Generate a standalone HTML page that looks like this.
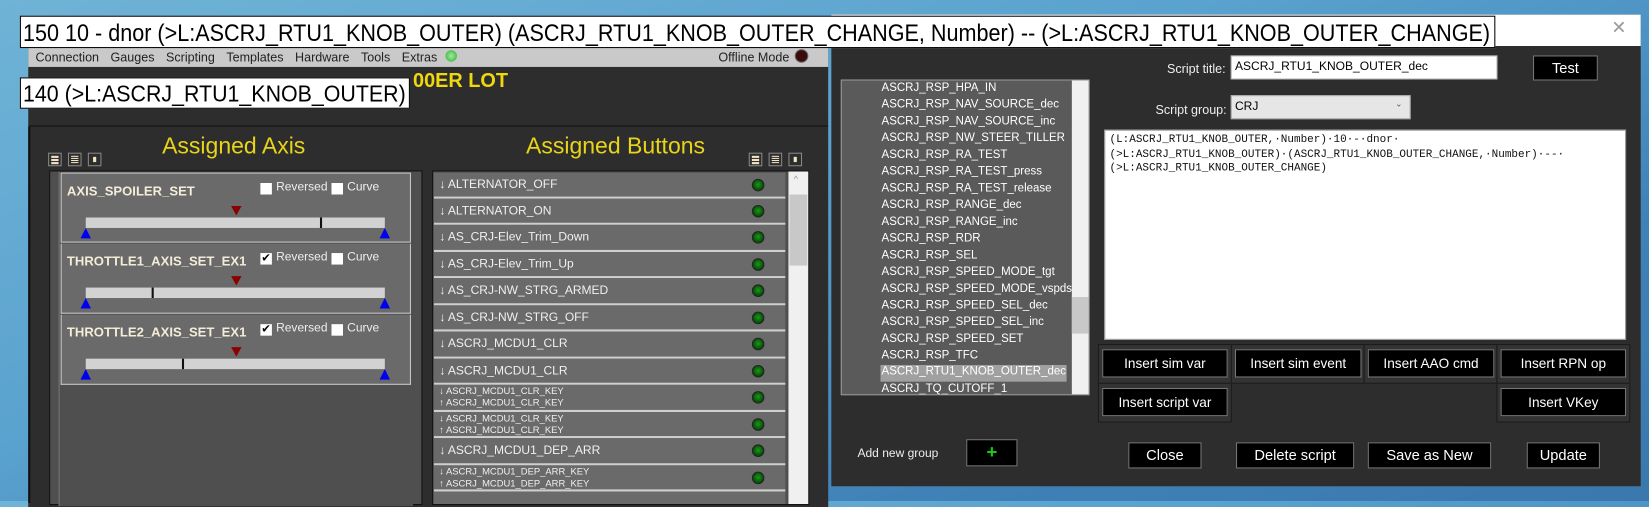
<!DOCTYPE html>
<html><head><meta charset="utf-8"><style>
*{margin:0;padding:0;box-sizing:border-box}
body{width:1649px;height:501px;overflow:hidden;background:linear-gradient(160deg,#6fb3d6 0%,#5aa2cf 40%,#3f82b8 75%,#3a78ad 100%);font-family:"Liberation Sans",sans-serif;position:relative}
#w{position:absolute;left:0;top:0;width:1577px;height:479px;transform:scale(1.0457);transform-origin:0 0}
.a{position:absolute}
.t{position:absolute;white-space:nowrap}
.menu span{margin-right:11px}
.item{position:absolute;left:10px;width:335px;height:67px;background:#6a6a6a;border:1px solid #c8c8c8;border-top:none}
.item .n{position:absolute;left:5px;top:10px;font-weight:bold;font-size:12.5px;color:#f3ecd8}
.cb{position:absolute;top:9px;width:11px;height:11px;background:#fff}
.lbl{position:absolute;top:7px;font-size:11.5px;color:#eee}
.bar{position:absolute;left:23px;top:42px;width:286px;height:10px;background:#d2d2d2}
.red{position:absolute;left:162px;top:31px;width:0;height:0;border-left:5px solid transparent;border-right:5px solid transparent;border-top:9px solid #8b0000}
.blu{position:absolute;top:52px;width:0;height:0;border-left:5px solid transparent;border-right:5px solid transparent;border-bottom:10px solid #0000f0}
.bi{position:absolute;left:1px;width:336px;background:#6a6a6a;border-bottom:2px solid #cfcfcf;color:#f0f0f0;font-size:11.5px}
.bi .l{position:absolute;left:5px;top:6px}
.bi .s{position:absolute;left:5px;font-size:9px}
.led{position:absolute;left:304px;width:12px;height:12px;border-radius:50%;background:radial-gradient(circle at 50% 45%,#1a9a1a,#064a06 70%);border:1px solid #222}
.ico{position:absolute;top:146px;width:13px;height:13px;border:1px solid #888;background:#2d2d2d}
.ico i{position:absolute;left:2px;right:2px;height:2px;background:#f4e4c4}
.li{position:absolute;left:38px;font-size:11px;color:#fff}
.btn{position:absolute;background:#000;border:1px solid #777;color:#fff;font-size:13px;text-align:center}
.cell{position:absolute;background:#333;border:1px solid #1c1c1c}
</style></head><body><div id="w">

<!-- left app -->
<div class="a" style="left:27px;top:45px;width:765px;height:440px;background:#2d2d2d"></div>
<div class="a menu" style="left:27px;top:45px;width:765px;height:19px;background:#c9c9c9;font-size:12px;color:#222;padding:3px 0 0 7px;white-space:nowrap"><span>Connection</span><span>Gauges</span><span>Scripting</span><span>Templates</span><span>Hardware</span><span>Tools</span><span>Extras</span></div>
<div class="a" style="left:426px;top:48px;width:11px;height:11px;border-radius:50%;background:radial-gradient(#9e9,#3a3)"></div>
<div class="t" style="left:687px;top:48px;font-size:12px;color:#222">Offline Mode</div>
<div class="a" style="left:760px;top:47px;width:13px;height:13px;border-radius:50%;background:#3a0c0c;border:1px solid #666"></div>
<div class="t" style="left:395px;top:67px;font-size:19px;font-weight:bold;color:#f0d810">00ER LOT</div>
<div class="a" style="left:28px;top:120px;width:764px;height:1px;background:#111"></div>
<div class="a" style="left:27px;top:121px;width:2px;height:360px;background:#111"></div>
<div class="t" style="left:155px;top:127px;font-size:22px;color:#e8d418">Assigned Axis</div>
<div class="t" style="left:503px;top:127px;font-size:22px;color:#e8d418">Assigned Buttons</div>
<div class="ico" style="left:46px"><i style="top:2px"></i><i style="top:5px"></i><i style="top:8px"></i></div>
<div class="ico" style="left:65px"><i style="top:2px;height:1px"></i><i style="top:4px;height:1px"></i><i style="top:6px;height:1px"></i><i style="top:8px;height:1px"></i></div>
<div class="ico" style="left:84px"><i style="left:4px;right:4px;top:3px;height:5px"></i></div>
<div class="ico" style="left:716px"><i style="top:2px"></i><i style="top:5px"></i><i style="top:8px"></i></div>
<div class="ico" style="left:735px"><i style="top:2px;height:1px"></i><i style="top:4px;height:1px"></i><i style="top:6px;height:1px"></i><i style="top:8px;height:1px"></i></div>
<div class="ico" style="left:754px"><i style="left:4px;right:4px;top:3px;height:5px"></i></div>

<!-- axis box -->
<div class="a" style="left:47px;top:163px;width:357px;height:320px;background:#4f4f4f;border:1px solid #111">
 <div class="a" style="left:8px;top:0;width:339px;height:320px;background:#4f4f4f;border-left:1px solid #777"></div>
 <div class="item" style="top:1px;border-top:1px solid #c8c8c8"><div class="n">AXIS_SPOILER_SET</div><div class="cb" style="left:190px"></div><div class="lbl" style="left:205px">Reversed</div><div class="cb" style="left:258px"></div><div class="lbl" style="left:273px">Curve</div><div class="bar"><div class="a" style="left:224px;top:0;width:2px;height:10px;background:#111"></div></div><div class="red"></div><div class="blu" style="left:18px"></div><div class="blu" style="left:304px"></div></div>
 <div class="item" style="top:69px"><div class="n">THROTTLE1_AXIS_SET_EX1</div><div class="cb" style="left:190px;color:#000;font-size:11px;line-height:11px;text-align:center">✔</div><div class="lbl" style="left:205px">Reversed</div><div class="cb" style="left:258px"></div><div class="lbl" style="left:273px">Curve</div><div class="bar"><div class="a" style="left:63px;top:0;width:2px;height:10px;background:#111"></div></div><div class="red"></div><div class="blu" style="left:18px"></div><div class="blu" style="left:304px"></div></div>
 <div class="item" style="top:137px"><div class="n">THROTTLE2_AXIS_SET_EX1</div><div class="cb" style="left:190px;color:#000;font-size:11px;line-height:11px;text-align:center">✔</div><div class="lbl" style="left:205px">Reversed</div><div class="cb" style="left:258px"></div><div class="lbl" style="left:273px">Curve</div><div class="bar"><div class="a" style="left:92px;top:0;width:2px;height:10px;background:#111"></div></div><div class="red"></div><div class="blu" style="left:18px"></div><div class="blu" style="left:304px"></div></div>
</div>

<!-- buttons list -->
<div class="a" style="left:413px;top:163px;width:361px;height:320px;background:#4f4f4f;border:1px solid #111;overflow:hidden">
 <div class="bi" style="top:1px;height:25px"><div class="l">↓ ALTERNATOR_OFF</div><div class="led" style="top:6px"></div></div>
 <div class="bi" style="top:26px;height:25px"><div class="l">↓ ALTERNATOR_ON</div><div class="led" style="top:6px"></div></div>
 <div class="bi" style="top:51px;height:26px"><div class="l">↓ AS_CRJ-Elev_Trim_Down</div><div class="led" style="top:6px"></div></div>
 <div class="bi" style="top:77px;height:25px"><div class="l">↓ AS_CRJ-Elev_Trim_Up</div><div class="led" style="top:6px"></div></div>
 <div class="bi" style="top:102px;height:26px"><div class="l">↓ AS_CRJ-NW_STRG_ARMED</div><div class="led" style="top:6px"></div></div>
 <div class="bi" style="top:128px;height:25px"><div class="l">↓ AS_CRJ-NW_STRG_OFF</div><div class="led" style="top:6px"></div></div>
 <div class="bi" style="top:153px;height:26px"><div class="l">↓ ASCRJ_MCDU1_CLR</div><div class="led" style="top:6px"></div></div>
 <div class="bi" style="top:179px;height:25px"><div class="l">↓ ASCRJ_MCDU1_CLR</div><div class="led" style="top:6px"></div></div>
 <div class="bi" style="top:204px;height:26px"><div class="s" style="top:1px">↓ ASCRJ_MCDU1_CLR_KEY</div><div class="s" style="top:12px">↑ ASCRJ_MCDU1_CLR_KEY</div><div class="led" style="top:6px"></div></div>
 <div class="bi" style="top:230px;height:25px"><div class="s" style="top:1px">↓ ASCRJ_MCDU1_CLR_KEY</div><div class="s" style="top:12px">↑ ASCRJ_MCDU1_CLR_KEY</div><div class="led" style="top:6px"></div></div>
 <div class="bi" style="top:255px;height:26px"><div class="l">↓ ASCRJ_MCDU1_DEP_ARR</div><div class="led" style="top:6px"></div></div>
 <div class="bi" style="top:281px;height:25px"><div class="s" style="top:1px">↓ ASCRJ_MCDU1_DEP_ARR_KEY</div><div class="s" style="top:12px">↑ ASCRJ_MCDU1_DEP_ARR_KEY</div><div class="led" style="top:6px"></div></div>
 <div class="bi" style="top:306px;height:25px"></div>
 <div class="a" style="left:340px;top:0;width:19px;height:320px;background:#f0f0f0"><div class="t" style="left:5px;top:2px;font-size:9px;color:#999">^</div><div class="a" style="left:1px;top:22px;width:17px;height:68px;background:#c8c8c8"></div></div>
</div>

<!-- dialog -->
<div class="a" style="left:795px;top:14px;width:774px;height:451px;background:#2d2d2d"></div>
<div class="a" style="left:795px;top:14px;width:774px;height:30px;background:#fff"></div>
<div class="t" style="left:1541px;top:17px;font-size:17px;color:#999">✕</div>
<div class="t" style="left:1116px;top:59px;font-size:12px;color:#eee">Script title:</div>
<div class="a" style="left:1177px;top:53px;width:255px;height:23px;background:#fff;border:1px solid #bbb;font-size:11.5px;padding:4px 3px;white-space:nowrap">ASCRJ_RTU1_KNOB_OUTER_dec</div>
<div class="btn" style="left:1466px;top:53px;width:62px;height:24px;font-size:14px;line-height:22px">Test</div>
<div class="t" style="left:1105px;top:98px;font-size:12px;color:#eee">Script group:</div>
<div class="a" style="left:1177px;top:91px;width:172px;height:23px;background:#e6e6e6;border:1px solid #aaa;font-size:11.5px;padding:4px 3px">CRJ<span style="position:absolute;right:7px;top:3px;font-size:8px;color:#555">⌄</span></div>

<div class="a" style="left:804px;top:76px;width:238px;height:302px;background:#5a5a5a;border:1px solid #999;overflow:hidden">
 <div class="li" style="top:1px">ASCRJ_RSP_HPA_IN</div>
 <div class="li" style="top:17px">ASCRJ_RSP_NAV_SOURCE_dec</div>
 <div class="li" style="top:33px">ASCRJ_RSP_NAV_SOURCE_inc</div>
 <div class="li" style="top:49px">ASCRJ_RSP_NW_STEER_TILLER</div>
 <div class="li" style="top:65px">ASCRJ_RSP_RA_TEST</div>
 <div class="li" style="top:81px">ASCRJ_RSP_RA_TEST_press</div>
 <div class="li" style="top:97px">ASCRJ_RSP_RA_TEST_release</div>
 <div class="li" style="top:113px">ASCRJ_RSP_RANGE_dec</div>
 <div class="li" style="top:129px">ASCRJ_RSP_RANGE_inc</div>
 <div class="li" style="top:145px">ASCRJ_RSP_RDR</div>
 <div class="li" style="top:161px">ASCRJ_RSP_SEL</div>
 <div class="li" style="top:177px">ASCRJ_RSP_SPEED_MODE_tgt</div>
 <div class="li" style="top:193px">ASCRJ_RSP_SPEED_MODE_vspds</div>
 <div class="li" style="top:209px">ASCRJ_RSP_SPEED_SEL_dec</div>
 <div class="li" style="top:225px">ASCRJ_RSP_SPEED_SEL_inc</div>
 <div class="li" style="top:241px">ASCRJ_RSP_SPEED_SET</div>
 <div class="li" style="top:257px">ASCRJ_RSP_TFC</div>
 <div class="li" style="top:272px;left:37px;background:#a0a0a0;padding:0 1px;height:16px">ASCRJ_RTU1_KNOB_OUTER_dec</div>
 <div class="li" style="top:289px">ASCRJ_TQ_CUTOFF_1</div>
 <div class="li" style="top:305px">ASCRJ_TQ_CUTOFF_2</div>
 <div class="a" style="left:220px;top:0;width:17px;height:302px;background:#f0f0f0"><div class="a" style="left:0;top:207px;width:17px;height:35px;background:#c8c8c8"></div></div>
</div>

<div class="a" style="left:1056px;top:124px;width:499px;height:201px;background:#fff;border:1px solid #999;font-family:'Liberation Mono',monospace;font-size:10.5px;line-height:13.5px;padding:3px 4px;color:#111;white-space:pre">(L:ASCRJ_RTU1_KNOB_OUTER,·Number)·10·-·dnor·
(>L:ASCRJ_RTU1_KNOB_OUTER)·(ASCRJ_RTU1_KNOB_OUTER_CHANGE,·Number)·--·
(>L:ASCRJ_RTU1_KNOB_OUTER_CHANGE)</div>

<div class="cell" style="left:1050px;top:329px;width:128px;height:38px"></div>
<div class="cell" style="left:1177px;top:329px;width:128px;height:38px"></div>
<div class="cell" style="left:1304px;top:329px;width:128px;height:38px"></div>
<div class="cell" style="left:1431px;top:329px;width:128px;height:38px"></div>
<div class="cell" style="left:1050px;top:366px;width:128px;height:38px"></div>
<div class="cell" style="left:1431px;top:366px;width:128px;height:38px"></div>
<div class="btn" style="left:1054px;top:334px;width:120px;height:27px;line-height:25px">Insert sim var</div>
<div class="btn" style="left:1181px;top:334px;width:121px;height:27px;line-height:25px">Insert sim event</div>
<div class="btn" style="left:1308px;top:334px;width:121px;height:27px;line-height:25px">Insert AAO cmd</div>
<div class="btn" style="left:1435px;top:334px;width:120px;height:27px;line-height:25px">Insert RPN op</div>
<div class="btn" style="left:1054px;top:371px;width:120px;height:27px;line-height:25px">Insert script var</div>
<div class="btn" style="left:1435px;top:371px;width:120px;height:27px;line-height:25px">Insert VKey</div>

<div class="t" style="left:820px;top:428px;font-size:11.5px;color:#eee">Add new group</div>
<div class="btn" style="left:924px;top:420px;width:49px;height:26px;color:#1c1;font-size:18px;line-height:22px;font-weight:bold">+</div>
<div class="btn" style="left:1079px;top:423px;width:70px;height:25px;font-size:14px;line-height:23px">Close</div>
<div class="btn" style="left:1182px;top:423px;width:113px;height:25px;font-size:14px;line-height:23px">Delete script</div>
<div class="btn" style="left:1308px;top:423px;width:118px;height:25px;font-size:14px;line-height:23px">Save as New</div>
<div class="btn" style="left:1460px;top:423px;width:70px;height:25px;font-size:14px;line-height:23px">Update</div>

<!-- tooltips -->
<div class="a" style="left:19px;top:15px;width:1411px;height:31px;background:#fff;border:1px solid #000">
<svg width="1409" height="29" style="position:absolute;left:0;top:0"><text x="2" y="23" font-family="Liberation Sans, sans-serif" font-size="23" textLength="1403" lengthAdjust="spacingAndGlyphs" fill="#000">150 10 - dnor (&gt;L:ASCRJ_RTU1_KNOB_OUTER) (ASCRJ_RTU1_KNOB_OUTER_CHANGE, Number) -- (&gt;L:ASCRJ_RTU1_KNOB_OUTER_CHANGE)</text></svg></div>
<div class="a" style="left:19px;top:74px;width:373px;height:30px;background:#fff;border:1px solid #000">
<svg width="371" height="28" style="position:absolute;left:0;top:0"><text x="2" y="22" font-family="Liberation Sans, sans-serif" font-size="22" textLength="366" lengthAdjust="spacingAndGlyphs" fill="#000">140 (&gt;L:ASCRJ_RTU1_KNOB_OUTER)</text></svg></div>

</div></body></html>
